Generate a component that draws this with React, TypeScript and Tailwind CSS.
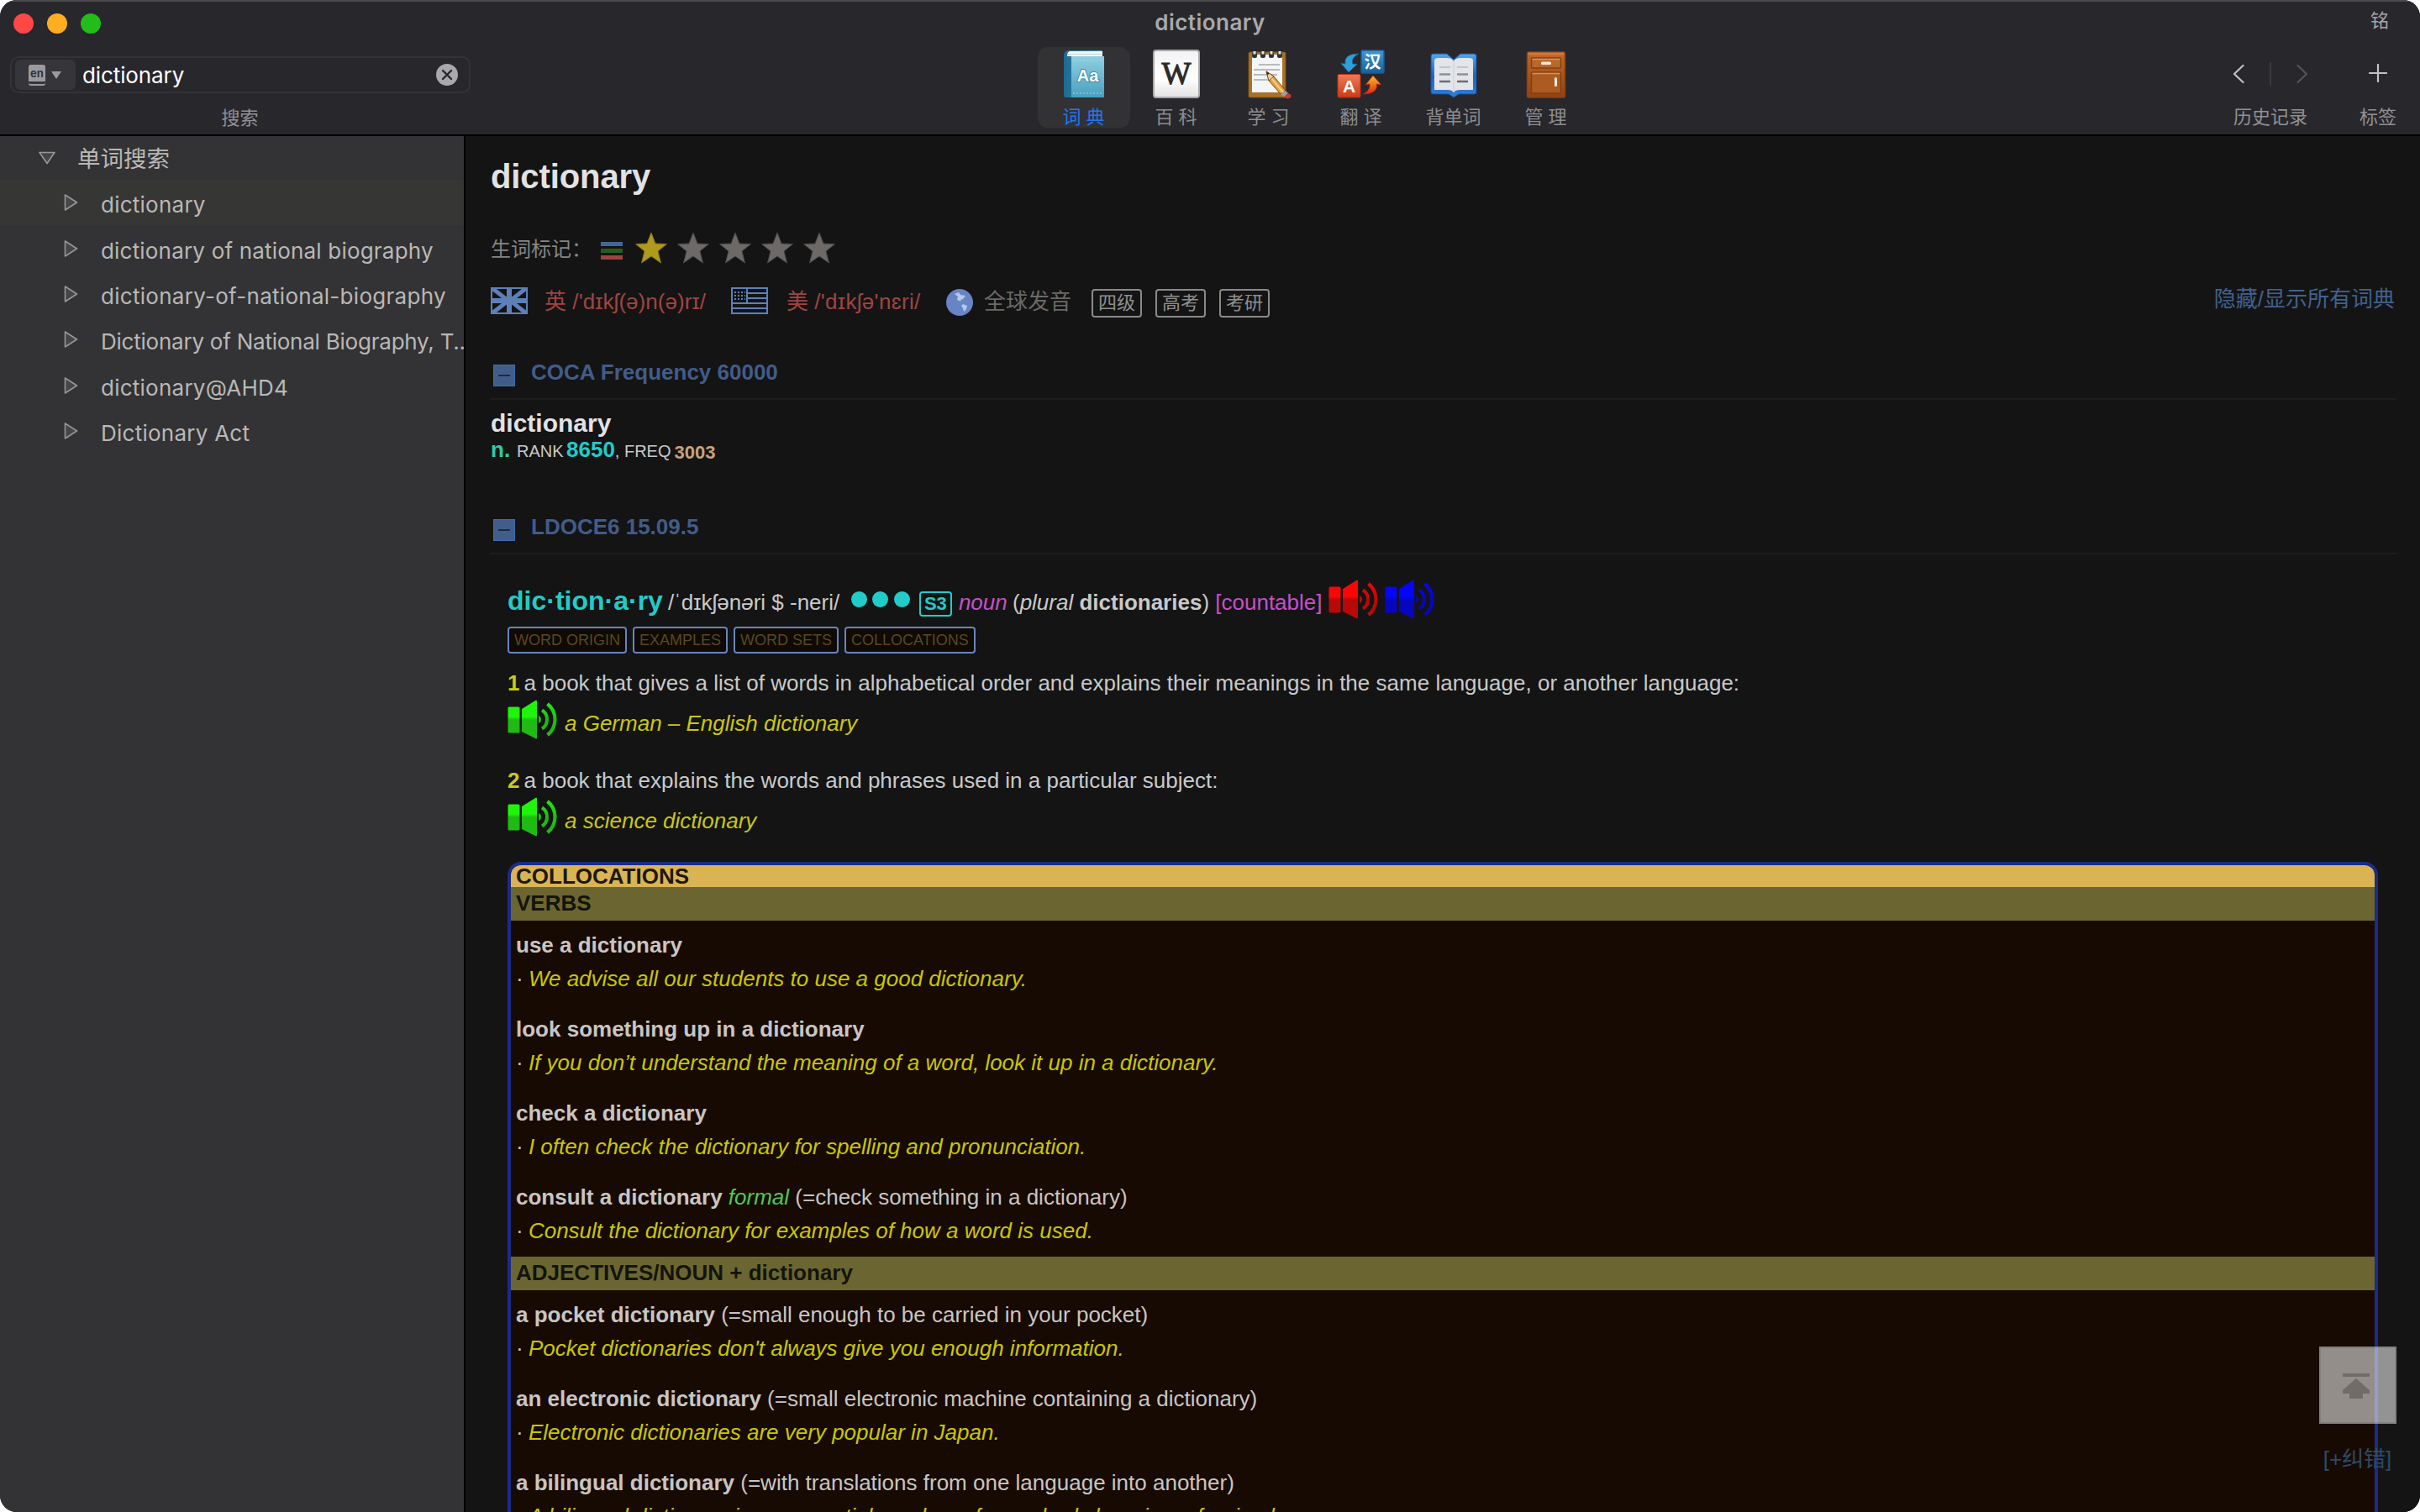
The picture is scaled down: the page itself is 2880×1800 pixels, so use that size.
import type { ReactNode } from 'react';

const UI = "font-['Inter','Noto_Sans_CJK_SC',sans-serif]";
const BODY = "font-['Liberation_Sans','Noto_Sans_CJK_SC',sans-serif]";

function DictIcon() {
  return (
    <svg className="shrink-0" width="52" height="60" viewBox="0 0 52 60">
      <defs>
        <linearGradient id="dc" x1="0" y1="0" x2="0" y2="1">
          <stop offset="0" stopColor="#8fd0e0" />
          <stop offset="1" stopColor="#4a9fbf" />
        </linearGradient>
        <linearGradient id="ds" x1="0" y1="0" x2="1" y2="0">
          <stop offset="0" stopColor="#1d6a94" />
          <stop offset="1" stopColor="#3f9cc2" />
        </linearGradient>
      </defs>
      <path d="M2 8 Q2 2 8 2 H46 Q48 2 48 4 V58 H4 Q2 58 2 55 Z" fill="url(#ds)" />
      <path d="M6 8 Q6 3 10 3 H48 V9 H6 Z" fill="#f2f6f8" />
      <path d="M6 6.500 H48" stroke="#c9d6dc" strokeWidth="1" />
      <rect x="11" y="9" width="39" height="49" fill="url(#dc)" />
      <path d="M13 14 H48 M13 53 H48" stroke="#9fd8e6" strokeWidth="1" strokeDasharray="2 2" />
      <text x="30.500" y="39" textAnchor="middle" fontSize="20" fontWeight="700" fill="#ffffff" stroke="#3b8fb2" strokeWidth="2" paintOrder="stroke" fontFamily="Liberation Sans, sans-serif">Aa</text>
    </svg>
  );
}

function WikiIcon() {
  return (
    <svg className="shrink-0" width="56" height="60" viewBox="0 0 56 60">
      <defs>
        <linearGradient id="wk" x1="0" y1="0" x2="0" y2="1">
          <stop offset="0" stopColor="#f2f2f2" />
          <stop offset="0.6" stopColor="#ffffff" />
          <stop offset="1" stopColor="#e2e2e2" />
        </linearGradient>
      </defs>
      <rect x="1" y="2" width="54" height="56" rx="3" fill="url(#wk)" stroke="#a9a9ab" strokeWidth="2" />
      <text x="28" y="42" textAnchor="middle" fontSize="37" fill="#2b2b2b" stroke="#2b2b2b" strokeWidth="1.100" fontFamily="Liberation Serif, serif">W</text>
    </svg>
  );
}

function StudyIcon() {
  return (
    <svg className="shrink-0" width="56" height="60" viewBox="0 0 56 60">
      <rect x="4" y="4" width="44" height="54" rx="1.500" fill="#a8722a" stroke="#7d5018" strokeWidth="1" />
      <rect x="8" y="7" width="36" height="45" fill="#f4f5f5" />
      <path d="M16 19 H41 M10 25 H41 M10 31 H38 M10 37 H38" stroke="#b9bcbe" strokeWidth="2" />
      {[11, 21, 31, 41].map((x) => (
        <g key={x}>
          <rect x={x - 3} y="4" width="6" height="7" rx="2" fill="#30343a" />
          <rect x={x - 1.5} y="3" width="3" height="3.500" fill="#e4e6e8" />
        </g>
      ))}
      <path d="M25 27 L34 33 L48 50 L42 54 L28 38 Z" fill="#e2a046" stroke="#7a4b17" strokeWidth="1" />
      <path d="M31 35 L45 52" stroke="#f7cf86" strokeWidth="2" />
      <path d="M25 27 L34 33 L28 38 Z" fill="#f0cf9d" stroke="#6d4518" strokeWidth="0.800" />
      <path d="M25 27 L28.500 29.500 L26.500 31.500 Z" fill="#33251a" />
      <path d="M42 54 L48 50 L51 53 L46 57.500 Z" fill="#9aa0a5" />
      <path d="M46 57.500 L51 53 Q56 55 54 58 Q50 61 46 57.500 Z" fill="#c9372f" />
    </svg>
  );
}

function TranslateIcon() {
  return (
    <svg className="shrink-0" width="60" height="60" viewBox="0 0 60 60">
      <defs>
        <linearGradient id="tb" x1="0" y1="0" x2="0" y2="1">
          <stop offset="0" stopColor="#3f9bd0" />
          <stop offset="1" stopColor="#17619f" />
        </linearGradient>
        <linearGradient id="tr" x1="0" y1="0" x2="0" y2="1">
          <stop offset="0" stopColor="#ee7a58" />
          <stop offset="1" stopColor="#cd3a17" />
        </linearGradient>
        <linearGradient id="to" x1="0" y1="0" x2="0" y2="1">
          <stop offset="0" stopColor="#fbc02d" />
          <stop offset="1" stopColor="#e2230f" />
        </linearGradient>
      </defs>
      <rect x="30" y="2" width="27" height="27" rx="1.500" fill="url(#tb)" stroke="#1f5b96" strokeWidth="1.500" />
      <text x="43.500" y="23" textAnchor="middle" fontSize="20" fontWeight="700" fill="#fff" fontFamily="Noto Sans CJK SC, sans-serif">汉</text>
      <rect x="2" y="30.500" width="27" height="27.500" rx="1.500" fill="url(#tr)" stroke="#b9300f" strokeWidth="1" />
      <text x="15.500" y="52" textAnchor="middle" fontSize="21" fontWeight="700" fill="#fff" fontFamily="Liberation Sans, sans-serif">A</text>
      <path d="M27 6 Q9 6 11 18 L6 17.500 L15 28 L25 18.500 L19.500 18 Q18 10 27 6 Z" fill="#2f9fd8" stroke="#1b6aa3" strokeWidth="0.800" />
      <path d="M32 54 Q50 54 48.500 42 L54 43 L44 32 L35 43 L40 42 Q41 50 32 54 Z" fill="url(#to)" stroke="#b3260e" strokeWidth="0.800" />
    </svg>
  );
}

function ReciteIcon() {
  return (
    <svg className="shrink-0" width="56" height="60" viewBox="0 0 56 60">
      <defs>
        <linearGradient id="rb" x1="0" y1="0" x2="0" y2="1">
          <stop offset="0" stopColor="#55a5e6" />
          <stop offset="0.500" stopColor="#2565b8" />
          <stop offset="1" stopColor="#2f7fd8" />
        </linearGradient>
      </defs>
      <path d="M1 8 Q1 6 4 6 H20 L28 13 L36 6 H52 Q55 6 55 8 V52 Q55 54 52 54 H34 L28 58 L22 54 H4 Q1 54 1 52 Z" fill="url(#rb)" stroke="#174f9b" strokeWidth="1" />
      <path d="M5 14 Q5 11 10 11 H20 Q26 11 28 15 Q30 11 36 11 H46 Q51 11 51 14 V49 H35 Q30 49 28 52 Q26 49 21 49 H5 Z" fill="#e2e5e9" />
      <path d="M28 15 V52" stroke="#d3d6da" strokeWidth="1.500" />
      <path d="M11 22 H24 M32 22 H45" stroke="#c2c5c9" strokeWidth="2" />
      <path d="M11 30.500 H24 M32 30.500 H45" stroke="#8d9196" strokeWidth="2.500" />
      <path d="M11 39 H24 M32 39 H45" stroke="#6a6e73" strokeWidth="2.500" />
    </svg>
  );
}

function CabinetIcon() {
  return (
    <svg className="shrink-0" width="48" height="60" viewBox="0 0 48 60">
      <defs>
        <linearGradient id="cb" x1="0" y1="0" x2="0" y2="1">
          <stop offset="0" stopColor="#bf6a2a" />
          <stop offset="1" stopColor="#8f4313" />
        </linearGradient>
      </defs>
      <rect x="1.500" y="4" width="45" height="54" rx="2" fill="url(#cb)" stroke="#8a4012" strokeWidth="1.500" />
      <rect x="2.500" y="4.500" width="43" height="3" fill="#c97a3c" />
      <rect x="6.500" y="11" width="35" height="12" rx="1" fill="#b9682a" stroke="#843f12" strokeWidth="1.500" />
      <path d="M7.500 12.500 H40.500" stroke="#dd9350" strokeWidth="1.500" />
      <rect x="18" y="15.500" width="12" height="3.500" rx="1.500" fill="#f1e9e2" />
      <rect x="6.500" y="28" width="35" height="25" rx="1" fill="#ac5c20" stroke="#843f12" strokeWidth="1.500" />
      <path d="M7.500 29.500 H40.500" stroke="#dd9350" strokeWidth="1.500" />
      <rect x="34" y="34" width="3" height="11" rx="1.500" fill="#f1e9e2" />
    </svg>
  );
}

const TABS: { label: string; icon: ReactNode; active?: boolean }[] = [
  { label: '词 典', icon: <DictIcon />, active: true },
  { label: '百 科', icon: <WikiIcon /> },
  { label: '学 习', icon: <StudyIcon /> },
  { label: '翻 译', icon: <TranslateIcon /> },
  { label: '背单词', icon: <ReciteIcon /> },
  { label: '管 理', icon: <CabinetIcon /> },
];

function Header() {
  return (
    <header className={`flex h-[162px] shrink-0 flex-col border-t-2 border-b-2 border-t-[#4b4b4d] border-b-black bg-[#28272c] ${UI}`}>
      <div className="grid h-[54px] grid-cols-[1fr_auto_1fr]">
        <div className="flex gap-4 pt-[14px] pl-4">
          <span className="size-6 rounded-full bg-[#ff4745]" />
          <span className="size-6 rounded-full bg-[#ffae21]" />
          <span className="size-6 rounded-full bg-[#22bd18]" />
        </div>
        <div className="pt-1 text-[26px] leading-[42px] font-semibold tracking-[0.480px] text-[#a9a9ab]">dictionary</div>
        <div className="pt-px pr-[37px] text-right text-[22px] leading-[42px] text-[#a6a6a8]">铭</div>
      </div>
      <div className="flex h-[104px]">
        <div className="w-[1235px] pt-[11px] pl-3">
          <div className="flex h-[44px] w-[548px] items-center rounded-[10px] border-2 border-[#343338] pr-[13px] pl-1">
            <div className="flex h-[36px] w-[72px] items-center rounded-md bg-[#363539] pl-4">
              <div className="flex flex-col gap-[2px]">
                <span className="flex h-5 w-5 items-center justify-center rounded-t-[3px] bg-[#9b9b9f] text-[13px] leading-5 font-bold text-[#363539]">en</span>
                <span className="h-[3px] w-5 rounded-b-[3px] border-b-2 border-[#9b9b9f]" />
              </div>
              <svg className="ml-[7px]" width="12" height="9" viewBox="0 0 12 9">
                <path d="M0 0 H12 L6 9 Z" fill="#9b9b9f" />
              </svg>
            </div>
            <span className="ml-2 flex-1 pt-[2px] text-[26px] leading-[38px] tracking-[-0.100px] text-white">dictionary</span>
            <svg width="26" height="26" viewBox="0 0 26 26">
              <circle cx="13" cy="13" r="13" fill="#a9a9ab" />
              <path d="M8 8 L18 18 M18 8 L8 18" stroke="#28272c" strokeWidth="2.400" strokeLinecap="round" />
            </svg>
          </div>
          <div className="mt-[13px] w-[547px] text-center text-[22px] leading-8 text-[#919193]">搜索</div>
        </div>
        <div className="flex">
          {TABS.map((t) => (
            <div key={t.label} className={`flex h-24 w-[110px] flex-col items-center rounded-xl pt-[2px] ${t.active ? 'bg-[#323234]' : ''}`}>
              {t.icon}
              <span className={`mt-[9px] -ml-px text-[22px] leading-[25px] whitespace-pre ${t.active ? 'text-[#1f76f5]' : 'text-[#8d8d8f]'}`}>{t.label}</span>
            </div>
          ))}
        </div>
        <div className="ml-auto flex">
          <div className="flex w-[90px] flex-col items-center">
            <div className="flex h-[65px] w-[90px] items-center justify-between pb-[2px]">
              <svg width="14" height="24" viewBox="0 0 14 24" fill="none" stroke="#c2c2c4" strokeWidth="2.200" strokeLinecap="round" strokeLinejoin="round">
                <path d="M12.500 2 L2 12 L12.500 22" />
              </svg>
              <span className="h-7 w-[2px] bg-[#3a393d]" />
              <svg width="14" height="24" viewBox="0 0 14 24" fill="none" stroke="#555457" strokeWidth="2.200" strokeLinecap="round" strokeLinejoin="round">
                <path d="M1.500 2 L12 12 L1.500 22" />
              </svg>
            </div>
            <span className="text-[22px] leading-[36px] whitespace-nowrap text-[#919193]">历史记录</span>
          </div>
          <div className="mr-6 ml-[57px] flex w-[52px] flex-col items-center">
            <div className="flex h-[65px] items-center pb-[4px]">
              <svg width="22" height="22" viewBox="0 0 22 22" stroke="#c2c2c4" strokeWidth="2.200" strokeLinecap="round">
                <path d="M11 1 V21 M1 11 H21" />
              </svg>
            </div>
            <span className="text-[22px] leading-[36px] whitespace-nowrap text-[#919193]">标签</span>
          </div>
        </div>
      </div>
    </header>
  );
}

const RESULTS = [
  { text: 'dictionary', tracking: 'tracking-[0.250px]' },
  { text: 'dictionary of national biography', tracking: 'tracking-[0.190px]' },
  { text: 'dictionary-of-national-biography', tracking: 'tracking-[0.280px]' },
  { text: 'Dictionary of National Biography, T..', tracking: 'tracking-[-0.230px]' },
  { text: 'dictionary@AHD4', tracking: 'tracking-[0.250px]' },
  { text: 'Dictionary Act', tracking: 'tracking-[0.250px]' },
];

function Sidebar() {
  return (
    <aside className={`w-[554px] shrink-0 overflow-hidden border-r-2 border-black bg-[#333335] text-[#b9b8b6] ${UI}`}>
      <div className="flex h-[52px] items-center pl-[45px]">
        <svg width="22" height="16" viewBox="0 0 22 16">
          <path d="M2 1.500 H20 L11 14.500 Z" fill="#484548" stroke="#979797" strokeWidth="1.600" strokeLinejoin="round" />
        </svg>
        <span className="ml-[25px] pt-[3px] text-[27.500px] leading-[49px]">单词搜索</span>
      </div>
      {RESULTS.map((r, i) => (
        <div key={r.text} className={`flex h-[54.400px] items-center pl-[76px] ${i === 0 ? 'bg-[#363635]' : ''}`}>
          <svg className="shrink-0" width="17" height="22" viewBox="0 0 17 22">
            <path d="M1.500 2 V20 L15.500 11 Z" fill="#484548" stroke="#979797" strokeWidth="1.600" strokeLinejoin="round" />
          </svg>
          <span className={`ml-[27px] pt-[5px] text-[26px] leading-[49px] whitespace-nowrap ${r.tracking}`}>{r.text}</span>
        </div>
      ))}
    </aside>
  );
}

function Star({ on }: { on?: boolean }) {
  return (
    <svg className="mr-[12px]" width="38" height="38" viewBox="0 0 38 38">
      <path d="M19 1 L24 14 L37.500 14.500 L27 23 L30.500 37 L19 29 L7.500 37 L11 23 L0.500 14.500 L14 14 Z" fill={on ? '#b09a1e' : '#6c6967'} stroke={on ? '#83721a' : '#4b4948'} strokeWidth="1" />
    </svg>
  );
}

function UkFlag() {
  return (
    <svg width="44" height="32" viewBox="0 0 44 32">
      <rect width="44" height="32" fill="#5e80b8" />
      <path d="M7 2 H19 V11.500 Z M2 4.500 L13 13 H2 Z M37 2 H25 V11.500 Z M42 4.500 L31 13 H42 Z M7 30 H19 V20.500 Z M2 27.500 L13 19 H2 Z M37 30 H25 V20.500 Z M42 27.500 L31 19 H42 Z" fill="#141414" />
    </svg>
  );
}

function UsFlag() {
  return (
    <svg width="44" height="32" viewBox="0 0 44 32">
      <rect width="44" height="32" fill="#5e80b8" />
      <path d="M20 2 H42 V6 H20 Z M20 8 H42 V12 H20 Z M20 14 H42 V18 H20 Z M2 20 H42 V24 H2 Z M2 26 H42 V30 H2 Z M2 2 H18 V18 H2 Z" fill="#141414" />
      <path d="M4 6 H17 M4 10 H17 M4 14 H17" stroke="#5e80b8" strokeWidth="2" strokeDasharray="2 2" />
    </svg>
  );
}

function Globe() {
  return (
    <svg width="32" height="32" viewBox="0 0 32 32">
      <circle cx="16" cy="16" r="16" fill="#6784c4" />
      <path d="M10 6 L15 4 L17 7 L23 8 L20 12 L17 13 L18 15 L13 13 L14 9 Z M20 18 L25 20 L24 24 L21 27 L20 23 L18 20 Z" fill="#b4cbe6" />
    </svg>
  );
}

function SectionHeader({ title }: { title: string }) {
  return (
    <div className="flex h-[53px] border-b-2 border-[#1d1d1d]">
      <span className="mt-[11px] ml-[3px] flex size-[26px] items-center justify-center border border-[#3e6db0] bg-[#435d8a]">
        <span className="h-[2px] w-[14px] bg-[#222a38]" />
      </span>
      <h2 className="ml-[19px] text-[26px] leading-[40px] font-bold text-[#425c8a]">{title}</h2>
    </div>
  );
}

function Speaker({ id, light, dark, className }: { id: string; light: string; dark: string; className?: string }) {
  return (
    <svg className={`shrink-0 ${className ?? ''}`} width="59" height="48" viewBox="0 0 59 48">
      <defs>
        <linearGradient id={id} gradientUnits="userSpaceOnUse" x1="0" y1="0" x2="0" y2="48">
          <stop offset="0.420" stopColor={light} />
          <stop offset="0.500" stopColor={dark} />
        </linearGradient>
        <linearGradient id={`${id}w`} gradientUnits="userSpaceOnUse" x1="0" y1="0" x2="0" y2="48">
          <stop offset="0" stopColor={light} />
          <stop offset="0.500" stopColor={dark} />
        </linearGradient>
      </defs>
      <rect x="0.500" y="8.500" width="14" height="31" rx="1.500" fill={`url(#${id})`} />
      <path d="M17 11 L34 0.500 Q35 0.500 35 2 V45 Q35 47 34 46.500 L17 38 Z" fill={`url(#${id})`} />
      <path d="M37 19 Q40 20 40 23.500 Q40 27 37 28 Z" fill={dark} />
      <path d="M41 12.500 Q47 16 47 23.500 Q47 31 41 34.500" fill="none" stroke={`url(#${id}w)`} strokeWidth="4" />
      <path d="M47.500 5 Q56.500 12 56.500 23.500 Q56.500 35 47.500 42" fill="none" stroke={`url(#${id}w)`} strokeWidth="4.200" />
    </svg>
  );
}

function Definition({ n, text, example }: { n: string; text: string; example: string }) {
  return (
    <div className="text-[26px]">
      <p className="leading-[40px] tracking-[0.010px] whitespace-nowrap text-[#c9c9c9]">
        <b className="mr-[5px] text-[#cbc916]">{n}</b>
        {text}
      </p>
      <div className="flex h-12">
        <Speaker id={`green${n}`} light="#1ff50b" dark="#1fba13" />
        <em className="mt-2 ml-[9px] leading-[40px] text-[#c9c716]">{example}</em>
      </div>
    </div>
  );
}

type Colloc = { head: string; note?: string; gloss?: string; example: string };

const VERBS: Colloc[] = [
  { head: 'use a dictionary', example: 'We advise all our students to use a good dictionary.' },
  { head: 'look something up in a dictionary', example: 'If you don’t understand the meaning of a word, look it up in a dictionary.' },
  { head: 'check a dictionary', example: 'I often check the dictionary for spelling and pronunciation.' },
  { head: 'consult a dictionary', note: 'formal', gloss: '(=check something in a dictionary)', example: 'Consult the dictionary for examples of how a word is used.' },
];

const ADJECTIVES: Colloc[] = [
  { head: 'a pocket dictionary', gloss: '(=small enough to be carried in your pocket)', example: "Pocket dictionaries don't always give you enough information." },
  { head: 'an electronic dictionary', gloss: '(=small electronic machine containing a dictionary)', example: 'Electronic dictionaries are very popular in Japan.' },
  { head: 'a bilingual dictionary', gloss: '(=with translations from one language into another)', example: 'A bilingual dictionary is an essential purchase for anybody learning a foreign language.' },
];

function CollocGroup({ title, items }: { title: string; items: Colloc[] }) {
  return (
    <>
      <h4 className="h-10 bg-[#6b6631] pl-[6px] leading-[38px] font-bold text-[#14140c]">{title}</h4>
      <div className="flex flex-col gap-5 pt-[9px] pb-[11px] pl-[6px] leading-[40px] text-[#c9c5c2]">
        {items.map((c) => (
          <div key={c.head}>
            <p>
              <b>{c.head}</b>
              {c.note && <em className="text-[#4fc94f]"> {c.note}</em>}
              {c.gloss && <span> {c.gloss}</span>}
            </p>
            <p>
              · <em className="-ml-px text-[#c9c700]">{c.example}</em>
            </p>
          </div>
        ))}
      </div>
    </>
  );
}

const LINKS = ['WORD ORIGIN', 'EXAMPLES', 'WORD SETS', 'COLLOCATIONS'];

function Entry() {
  return (
    <main className={`min-w-0 flex-1 overflow-hidden bg-[#141414] pr-7 pl-[30px] text-[26px] text-[#c9c9c9] ${BODY}`}>
      <h1 className="mt-6 text-[40px] leading-[48px] font-bold tracking-[-0.100px] text-[#e2e2e4]">dictionary</h1>

      <div className="mt-[41px] flex h-10 items-center">
        <span className="w-[131px] pt-[3px] text-[24px] leading-10 text-[#858585]">生词标记：</span>
        <span className="mt-[7px] mr-[15px] flex w-[26px] flex-col gap-[3px]">
          <span className="h-[5px] bg-[#45659a]" />
          <span className="h-[5px] bg-[#2b5a1c]" />
          <span className="h-[5px] bg-[#9d4244]" />
        </span>
        <Star on />
        <Star />
        <Star />
        <Star />
        <Star />
      </div>

      <div className="mt-[25px] flex h-10 leading-10">
        <span className="mt-[2px]"><UkFlag /></span>
        <span className="-mt-px ml-5 w-[202px] tracking-[0.060px] whitespace-nowrap text-[#a04443]">英 /'dɪkʃ(ə)n(ə)rɪ/</span>
        <span className="mt-[2px] ml-5"><UsFlag /></span>
        <span className="-mt-px ml-[22px] w-[190px] whitespace-nowrap text-[#a04443]">美 <span className="tracking-[0.320px]">/'dɪkʃə'nɛri/</span></span>
        <span className="mt-[4px]"><Globe /></span>
        <span className="-mt-px ml-[13px] w-[128px] text-[#6b6966]">全球发音</span>
        <span className="mt-[4px] flex gap-4 text-[22px] leading-[29px] text-[#8f8f8f]">
          {['四级', '高考', '考研'].map((t) => (
            <span key={t} className="h-[34px] w-[60px] rounded-[4px] border-2 border-[#8a8a8a] text-center">{t}</span>
          ))}
        </span>
        <span className="-mt-[4px] mr-[2px] ml-auto text-[#42618f]">隐藏/显示所有词典</span>
      </div>

      <section className="mt-[43px]">
        <SectionHeader title="COCA Frequency 60000" />
        <p className="mt-[10px] h-[34px] text-[30px] leading-[35px] font-bold text-[#e2e2e4]">dictionary</p>
        <p className="flex h-[30px] items-baseline leading-[30px] whitespace-pre">
          <b className="w-[31px] text-[#2ecba6]">n.</b>
          <span className="w-[59px] text-[20px] text-[#c9c9c9]">RANK</span>
          <b className="text-[#22cbc9]">8650</b>
          <span className="text-[20px]">, FREQ</span>
          <b className="relative top-[2px] ml-[4px] text-[22px] text-[#c8a27c]">3003</b>
        </p>
      </section>

      <section className="mt-[57px]">
        <SectionHeader title="LDOCE6 15.09.5" />
        <div className="pr-[22px] pl-5">
          <div className="mt-[30px] flex h-[50px] items-baseline leading-[40px] whitespace-pre">
            <span className="text-[32px] leading-[50px] font-bold text-[#22cbc9]">dic·tion·a·ry</span>
            <span className="ml-[6px] w-[218px]">/ˈdɪkʃən<i>ə</i>ri $ -neri/</span>
            <span className="mt-[14px] flex gap-[6.500px] self-start">
              <i className="size-[19px] rounded-full bg-[#22cbc9]" />
              <i className="size-[19px] rounded-full bg-[#22cbc9]" />
              <i className="size-[19px] rounded-full bg-[#22cbc9]" />
            </span>
            <b className="mt-[14px] ml-[11px] h-[30px] w-[39px] self-start rounded-[4px] border-2 border-[#22cbc9] text-center text-[22px] leading-[25px] text-[#22cbc9]">S3</b>
            <i className="ml-[8px] text-[#c74fc9]">noun</i>
            <span className="-ml-px"> (<i>plural</i> <b>dictionaries</b>) </span>
            <span className="text-[#c74fc9]">[countable]</span>
            <Speaker id="red" light="#fb0606" dark="#b80808" className="ml-[7px] self-start" />
            <Speaker id="blue" light="#0505fb" dark="#0606c0" className="ml-[8px] self-start" />
          </div>
          <div className="mt-[6px] flex gap-[7px] text-[18px] leading-[28px] text-[#584822]">
            {LINKS.map((l) => (
              <span key={l} className="h-8 rounded-[4px] border-2 border-[#6884bf] bg-[#0f0a03] px-[6px]">{l}</span>
            ))}
          </div>
          <div className="mt-[15px] flex flex-col gap-7">
            <Definition n="1" text="a book that gives a list of words in alphabetical order and explains their meanings in the same language, or another language:" example="a German – English dictionary" />
            <Definition n="2" text="a book that explains the words and phrases used in a particular subject:" example="a science dictionary" />
          </div>
          <div className="mt-[29px] overflow-hidden rounded-[16px] border-4 border-[#1b2b88] bg-[#170a02]">
            <h3 className="h-[26px] bg-[#dab453] pl-[6px] leading-[26px] font-bold text-[#1d1812]">COLLOCATIONS</h3>
            <CollocGroup title="VERBS" items={VERBS} />
            <CollocGroup title="ADJECTIVES/NOUN + dictionary" items={ADJECTIVES} />
          </div>
        </div>
      </section>
    </main>
  );
}

export default function App() {
  return (
    <div className="h-[1800px] w-[2880px] bg-white">
      <div className="relative flex h-full w-full flex-col overflow-hidden rounded-[20px] bg-[#141414]">
        <Header />
        <div className="flex h-[1638px]">
          <Sidebar />
          <Entry />
        </div>
        <div className={`absolute right-7 bottom-[43px] flex w-[92px] flex-col items-center ${BODY}`}>
          <div className="flex size-[92px] items-center justify-center border-2 border-black/10 bg-white/54">
            <svg className="mt-[4px] mr-[4px]" width="32" height="32" viewBox="0 0 32 32" fill="#716c69">
              <rect width="32" height="4" />
              <path d="M16 6 L32 20 V24 H24 V30 H8 V24 H0 V20 Z" />
            </svg>
          </div>
          <span className="mt-[22px] mr-[1px] text-[26px] leading-10 whitespace-nowrap text-[#2f4a66]">[+纠错]</span>
        </div>
      </div>
    </div>
  );
}
